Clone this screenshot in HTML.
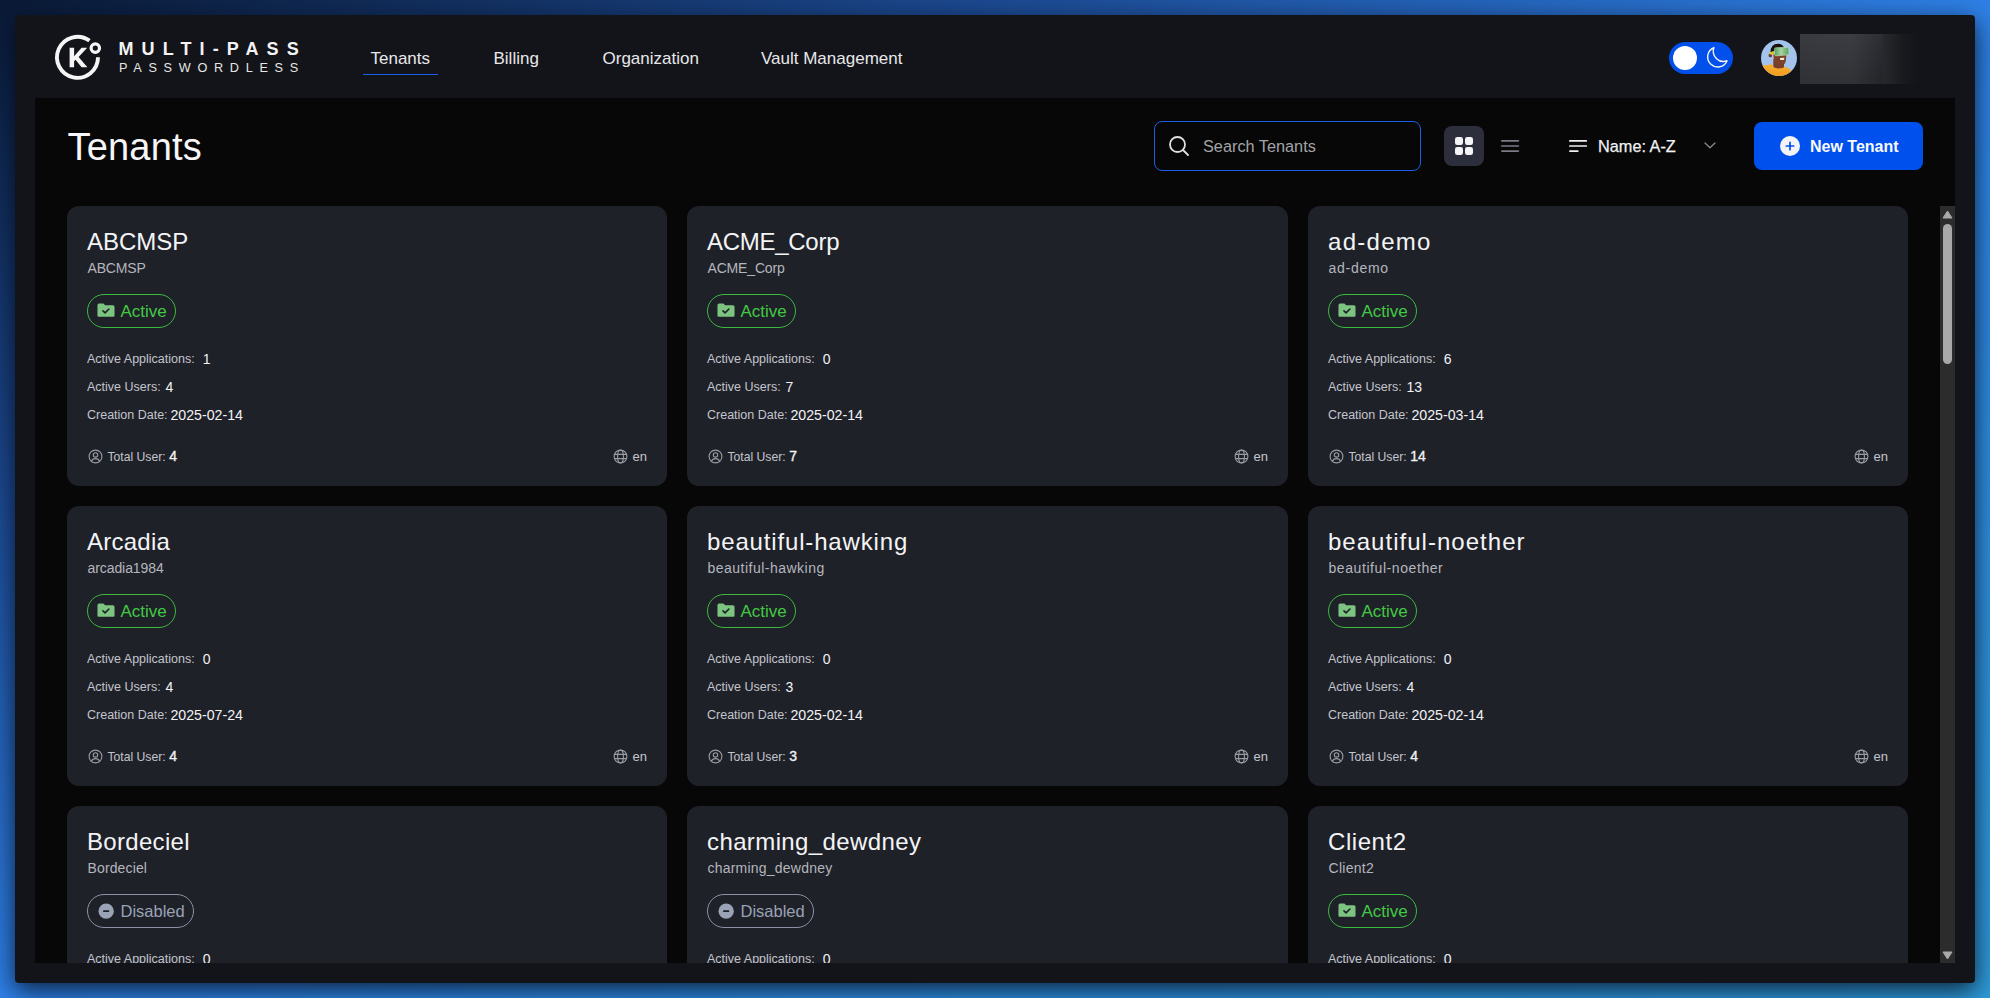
<!DOCTYPE html>
<html><head><meta charset="utf-8">
<style>
*{box-sizing:border-box;margin:0;padding:0}
html,body{width:1990px;height:998px;overflow:hidden}
body{position:relative;font-family:"Liberation Sans",sans-serif;background:linear-gradient(to bottom right,#0a1a36 0%,#1c4a92 25%,#2e80e6 50%,#2e8fe0 75%,#2e9ad8 100%)}
.abs{position:absolute}
.win{position:absolute;left:15px;top:15px;width:1960px;height:968px;background:#131419;border-radius:4px;box-shadow:0 7px 24px rgba(2,6,18,0.8)}
.t{position:absolute;white-space:nowrap;line-height:1}
.content{position:absolute;left:35px;top:98px;width:1920px;height:865px;background:#070707;overflow:hidden}
.nav{color:#e8e8ea;font-size:17px}
.card{position:absolute;width:600.33px;height:280px;background:#1f2129;border-radius:12px}
.card .t,.card div{position:absolute;white-space:nowrap;line-height:1}
.cname{left:20px;top:24px;font-size:24px;color:#f4f4f6}
.csub{left:20.5px;top:55px;font-size:14px;color:#b4b6bd}
.badge{left:20px;top:88px;height:34px;border-radius:17px;border:1.3px solid #3cb93f}
.badge span{position:absolute;top:8px;font-size:17px;line-height:1}
.badge .bi{position:absolute}
.badge.act{width:89px;border-color:#3cb93f}
.badge.act span{left:32.5px;color:#43c844}
.badge.act .bi{left:8.8px;top:8px;width:18px;height:14.3px}
.badge.dis{width:107px;border-color:#8a92a4}
.badge.dis span{left:32.5px;color:#9aa3b5;font-size:16.5px;top:7.5px}
.badge.dis .bi{left:9.7px;top:8px;width:16.3px;height:16.3px}
.row{left:20px;font-size:12.5px;width:300px;height:16px}
.lab{color:#c3c5cc}
.row .lab{position:absolute;left:0;top:0}
.val{position:absolute;top:-1px;color:#f2f2f4;font-size:14px}
.r1 .val{left:114.5px}
.r2 .val{left:78.2px}
.r3 .val{left:83px;font-size:14.2px}
.r1{top:147.3px}
.r2{top:175.3px}
.r3{top:203.3px}
.foot{left:20px;top:243px;font-size:12.5px;width:120px;height:16px}
.foot svg{position:absolute;left:0.7px;top:-0.3px}
.foot .lab{position:absolute;left:20.4px;top:1.5px;font-size:12.2px}
.foot .tv{position:absolute;left:82px;top:0;font-size:14px;color:#f2f2f4;-webkit-text-stroke:0.35px #f2f2f4}
.lang{right:20px;top:243px;width:34px;height:15px;font-size:13px;color:#c3c5cc}
.lang svg{position:absolute;left:0;top:0}
.lang span{position:absolute;left:19.5px;top:0.5px}
</style></head><body>
<div class="win"></div>

<!-- logo -->
<svg class="abs" style="left:52px;top:32px" width="52" height="52" viewBox="0 0 52 52">
  <path d="M37.46 8.65 A20.5 20.5 0 1 0 46 25.3" fill="none" stroke="#f5f5f5" stroke-width="3.9"/>
  <circle cx="43.3" cy="16.1" r="4.2" fill="none" stroke="#f5f5f5" stroke-width="3.2"/>
  <path d="M17.6 15.7 H22.1 V24.2 L29.6 15.7 H35.2 L26.6 25 L35.4 35.3 H29.6 L23.5 27.8 L22.1 29.3 V35.3 H17.6 Z" fill="#f5f5f5"/>
</svg>
<div class="t" style="left:118.5px;top:39.7px;font-size:18px;font-weight:bold;color:#f3f3f3;letter-spacing:8.1px">MULTI-PASS</div>
<div class="t" style="left:119px;top:62px;font-size:12.7px;color:#e6e6e6;letter-spacing:6.7px">PASSWORDLESS</div>

<!-- nav -->
<div class="t nav" style="left:370.5px;top:50px">Tenants</div>
<div class="abs" style="left:363px;top:73.7px;width:75px;height:1.6px;background:#1a5ee8"></div>
<div class="t nav" style="left:493.5px;top:50px">Billing</div>
<div class="t nav" style="left:602.5px;top:50px">Organization</div>
<div class="t nav" style="left:761px;top:50px">Vault Management</div>

<!-- toggle -->
<div class="abs" style="left:1669px;top:42px;width:64px;height:32px;border-radius:16px;background:#0150ec"></div>
<div class="abs" style="left:1673px;top:46px;width:24px;height:24px;border-radius:12px;background:#fff"></div>
<svg class="abs" style="left:1700px;top:40px" width="36" height="36" viewBox="0 0 36 36"><path d="M13.9 7.6 A10.1 10.1 0 1 0 27.1 20.8 A10.3 10.3 0 0 1 13.9 7.6 Z" fill="none" stroke="#f4f4f4" stroke-width="1.45" stroke-linejoin="round"/></svg>

<!-- avatar -->
<svg class="abs" style="left:1761px;top:40px" width="36" height="36" viewBox="0 0 36 36">
 <defs><clipPath id="ac"><circle cx="18" cy="18" r="18"/></clipPath>
 <linearGradient id="gg" x1="0" x2="1"><stop offset="0" stop-color="#4aa056"/><stop offset="0.45" stop-color="#a9d2a6"/><stop offset="1" stop-color="#55a35c"/></linearGradient>
 <linearGradient id="sw" x1="0" y1="0" x2="0" y2="1"><stop offset="0" stop-color="#f7b032"/><stop offset="1" stop-color="#f09a1e"/></linearGradient></defs>
 <g clip-path="url(#ac)">
  <rect width="36" height="36" fill="#a3c3ee"/>
  <path d="M12.3 19 L12.3 29 L23 29 L23 21 Z" fill="#7a3d26"/>
  <path d="M12.5 14 Q12.2 22 16 23.6 Q20 25 24 23.4 Q25.5 20 25.2 14 Z" fill="#7d4028"/>
  <ellipse cx="9.3" cy="15.4" rx="1.7" ry="1.9" fill="#6e3822"/>
  <path d="M9.4 12.5 Q9.6 4 17 3.8 Q22 3.8 23.5 9 L13 11 Z" fill="#17110e"/>
  <rect x="8.6" y="11.8" width="4.6" height="2.8" rx="1.2" fill="#e6c21e"/>
  <path d="M13.4 9.3 Q13.2 8 14.6 7.7 L26.2 7.3 Q27.6 7.3 27.7 8.6 L27.9 13.5 Q27.9 14.8 26.6 14.9 L15 15.9 Q13.8 16 13.6 14.8 Z" fill="url(#gg)" stroke="#d8e8c8" stroke-width="0.5"/>
  <path d="M19 18 L23.3 17.8 L23 20 L19.3 20.1 Z" fill="#f4f0ea"/>
  <path d="M-1 25 Q5 26 10.5 24 Q12 28 17 28.5 Q22 28.6 24.3 26.8 Q28 28 31 31.5 L36 36 L-1 36 Z" fill="url(#sw)"/>
 </g>
</svg>
<!-- blurred name -->
<div class="abs" style="left:1800px;top:34px;width:128px;height:50px;background:linear-gradient(to bottom,rgba(255,255,255,0.02),rgba(0,0,0,0.12)) 0 0/65% 100% no-repeat,linear-gradient(to right,#36373c 0%,#38393e 40%,#2a2b30 62%,#18191d 82%,#131419 92%)"></div>

<!-- content -->
<div class="content"></div>
<div class="t" style="left:67.5px;top:127.5px;font-size:38px;color:#f6f6f8;letter-spacing:0.2px">Tenants</div>

<!-- search -->
<div class="abs" style="left:1154px;top:121px;width:267px;height:50px;border:1.3px solid #1d5ee6;border-radius:8px"></div>
<svg class="abs" style="left:1167px;top:134px" width="24" height="24" viewBox="0 0 24 24" fill="none" stroke="#e0e0e2" stroke-width="1.8" stroke-linecap="round"><circle cx="10.5" cy="10.5" r="7.5"/><path d="M16 16 L21 21"/></svg>
<div class="t" style="left:1203px;top:138px;font-size:16.3px;color:#a3a4a8">Search Tenants</div>

<!-- view toggle -->
<div class="abs" style="left:1444px;top:126px;width:40px;height:40px;border-radius:8px;background:#2c2f3b"></div>
<svg class="abs" style="left:1455px;top:137px" width="18" height="18" viewBox="0 0 18 18" fill="#f4f4f6"><rect x="0" y="0" width="8" height="8" rx="2.3"/><rect x="10" y="0" width="8" height="8" rx="2.3"/><rect x="0" y="10" width="8" height="8" rx="2.3"/><rect x="10" y="10" width="8" height="8" rx="2.3"/></svg>
<svg class="abs" style="left:1500px;top:138px" width="20" height="16" viewBox="0 0 20 16" stroke="#7a7b87" stroke-width="1.6" stroke-linecap="round"><path d="M1.8 2.9 H18.4 M1.8 8 H18.4 M1.8 13.1 H18.4"/></svg>

<!-- sort -->
<svg class="abs" style="left:1568px;top:138px" width="20" height="16" viewBox="0 0 20 16" stroke="#f0f0f2" stroke-width="1.7" stroke-linecap="round"><path d="M1.85 2.9 H18.25 M1.85 8 H18.25 M1.85 13.1 H9.85"/></svg>
<div class="t" style="left:1598px;top:138px;font-size:16.3px;color:#f2f2f4;-webkit-text-stroke:0.25px #f2f2f4">Name: A-Z</div>
<svg class="abs" style="left:1703px;top:141px" width="14" height="9" viewBox="0 0 14 9" fill="none" stroke="#8c8d92" stroke-width="1.2" stroke-linecap="round" stroke-linejoin="round"><path d="M2 2 L7 6.8 L12 2"/></svg>

<!-- new tenant -->
<div class="abs" style="left:1754px;top:122px;width:169px;height:48px;border-radius:8px;background:#0050ee"></div>
<svg class="abs" style="left:1779.5px;top:136px" width="20" height="20" viewBox="0 0 20 20"><circle cx="10" cy="10" r="10" fill="#f4f4f8"/><path d="M10 6.3 V13.7 M6.3 10 H13.7" stroke="#0050ee" stroke-width="1.7" stroke-linecap="round"/></svg>
<div class="t" style="left:1810px;top:138.5px;font-size:16px;font-weight:bold;color:#fafafc">New Tenant</div>

<!-- cards -->
<div class="abs" style="left:0;top:206px;width:1940px;height:757px;overflow:hidden">
<div class="abs" style="left:0;top:-206px;width:1990px;height:998px">
<div class="card" style="left:67px;top:206px;width:600px">
<div class="cname" style="letter-spacing:-0.02px">ABCMSP</div>
<div class="csub" style="letter-spacing:-0.18px">ABCMSP</div>
<div class="badge act"><svg class="bi" width="19" height="15" viewBox="0 0 19 15"><path d="M0.5 2.2 Q0.5 0.5 2.2 0.5 L6.8 0.5 L8.6 2.3 L16.8 2.3 Q18.5 2.3 18.5 4 L18.5 13.3 Q18.5 14.5 17.3 14.5 L1.7 14.5 Q0.5 14.5 0.5 13.3 Z" fill="#7cc47f"/><path d="M6.3 8.3 L8.5 10.4 L12.6 6.3" stroke="#1f2129" stroke-width="1.7" fill="none" stroke-linecap="round" stroke-linejoin="round"/></svg><span>Active</span></div>
<div class="row r1"><span class="lab">Active Applications:</span><span class="val" style="left:115.80px">1</span></div>
<div class="row r2"><span class="lab">Active Users:</span><span class="val" style="left:78.40px">4</span></div>
<div class="row r3"><span class="lab">Creation Date:</span><span class="val v3" style="left:83.40px">2025-02-14</span></div>
<div class="foot"><svg width="15" height="15" viewBox="0 0 15 15" fill="none" stroke="#9a9ca4" stroke-width="1.1"><circle cx="7.5" cy="7.5" r="6.4"/><circle cx="7.5" cy="5.9" r="2.2"/><path d="M3.4 12.4 Q4.4 9.6 7.5 9.6 Q10.6 9.6 11.6 12.4"/></svg><span class="lab">Total User:</span><span class="tv" style="left:82.20px">4</span></div>
<div class="lang"><svg width="15" height="15" viewBox="0 0 15 15" fill="none" stroke="#9a9ca4" stroke-width="1.1"><circle cx="7.5" cy="7.5" r="6.4"/><ellipse cx="7.5" cy="7.5" rx="2.9" ry="6.4"/><path d="M1.4 5.4 H13.6 M1.4 9.6 H13.6"/></svg><span>en</span></div>
</div>
<div class="card" style="left:687px;top:206px;width:601px">
<div class="cname" style="letter-spacing:-0.275px">ACME_Corp</div>
<div class="csub" style="letter-spacing:-0.162px">ACME_Corp</div>
<div class="badge act"><svg class="bi" width="19" height="15" viewBox="0 0 19 15"><path d="M0.5 2.2 Q0.5 0.5 2.2 0.5 L6.8 0.5 L8.6 2.3 L16.8 2.3 Q18.5 2.3 18.5 4 L18.5 13.3 Q18.5 14.5 17.3 14.5 L1.7 14.5 Q0.5 14.5 0.5 13.3 Z" fill="#7cc47f"/><path d="M6.3 8.3 L8.5 10.4 L12.6 6.3" stroke="#1f2129" stroke-width="1.7" fill="none" stroke-linecap="round" stroke-linejoin="round"/></svg><span>Active</span></div>
<div class="row r1"><span class="lab">Active Applications:</span><span class="val" style="left:115.80px">0</span></div>
<div class="row r2"><span class="lab">Active Users:</span><span class="val" style="left:78.40px">7</span></div>
<div class="row r3"><span class="lab">Creation Date:</span><span class="val v3" style="left:83.40px">2025-02-14</span></div>
<div class="foot"><svg width="15" height="15" viewBox="0 0 15 15" fill="none" stroke="#9a9ca4" stroke-width="1.1"><circle cx="7.5" cy="7.5" r="6.4"/><circle cx="7.5" cy="5.9" r="2.2"/><path d="M3.4 12.4 Q4.4 9.6 7.5 9.6 Q10.6 9.6 11.6 12.4"/></svg><span class="lab">Total User:</span><span class="tv" style="left:82.20px">7</span></div>
<div class="lang"><svg width="15" height="15" viewBox="0 0 15 15" fill="none" stroke="#9a9ca4" stroke-width="1.1"><circle cx="7.5" cy="7.5" r="6.4"/><ellipse cx="7.5" cy="7.5" rx="2.9" ry="6.4"/><path d="M1.4 5.4 H13.6 M1.4 9.6 H13.6"/></svg><span>en</span></div>
</div>
<div class="card" style="left:1308px;top:206px;width:600px">
<div class="cname" style="letter-spacing:1.283px">ad-demo</div>
<div class="csub" style="letter-spacing:0.733px">ad-demo</div>
<div class="badge act"><svg class="bi" width="19" height="15" viewBox="0 0 19 15"><path d="M0.5 2.2 Q0.5 0.5 2.2 0.5 L6.8 0.5 L8.6 2.3 L16.8 2.3 Q18.5 2.3 18.5 4 L18.5 13.3 Q18.5 14.5 17.3 14.5 L1.7 14.5 Q0.5 14.5 0.5 13.3 Z" fill="#7cc47f"/><path d="M6.3 8.3 L8.5 10.4 L12.6 6.3" stroke="#1f2129" stroke-width="1.7" fill="none" stroke-linecap="round" stroke-linejoin="round"/></svg><span>Active</span></div>
<div class="row r1"><span class="lab">Active Applications:</span><span class="val" style="left:115.80px">6</span></div>
<div class="row r2"><span class="lab">Active Users:</span><span class="val" style="left:78.40px">13</span></div>
<div class="row r3"><span class="lab">Creation Date:</span><span class="val v3" style="left:83.40px">2025-03-14</span></div>
<div class="foot"><svg width="15" height="15" viewBox="0 0 15 15" fill="none" stroke="#9a9ca4" stroke-width="1.1"><circle cx="7.5" cy="7.5" r="6.4"/><circle cx="7.5" cy="5.9" r="2.2"/><path d="M3.4 12.4 Q4.4 9.6 7.5 9.6 Q10.6 9.6 11.6 12.4"/></svg><span class="lab">Total User:</span><span class="tv" style="left:82.20px">14</span></div>
<div class="lang"><svg width="15" height="15" viewBox="0 0 15 15" fill="none" stroke="#9a9ca4" stroke-width="1.1"><circle cx="7.5" cy="7.5" r="6.4"/><ellipse cx="7.5" cy="7.5" rx="2.9" ry="6.4"/><path d="M1.4 5.4 H13.6 M1.4 9.6 H13.6"/></svg><span>en</span></div>
</div>
<div class="card" style="left:67px;top:506px;width:600px">
<div class="cname" style="letter-spacing:0.25px">Arcadia</div>
<div class="csub" style="letter-spacing:-0.08px">arcadia1984</div>
<div class="badge act"><svg class="bi" width="19" height="15" viewBox="0 0 19 15"><path d="M0.5 2.2 Q0.5 0.5 2.2 0.5 L6.8 0.5 L8.6 2.3 L16.8 2.3 Q18.5 2.3 18.5 4 L18.5 13.3 Q18.5 14.5 17.3 14.5 L1.7 14.5 Q0.5 14.5 0.5 13.3 Z" fill="#7cc47f"/><path d="M6.3 8.3 L8.5 10.4 L12.6 6.3" stroke="#1f2129" stroke-width="1.7" fill="none" stroke-linecap="round" stroke-linejoin="round"/></svg><span>Active</span></div>
<div class="row r1"><span class="lab">Active Applications:</span><span class="val" style="left:115.80px">0</span></div>
<div class="row r2"><span class="lab">Active Users:</span><span class="val" style="left:78.40px">4</span></div>
<div class="row r3"><span class="lab">Creation Date:</span><span class="val v3" style="left:83.40px">2025-07-24</span></div>
<div class="foot"><svg width="15" height="15" viewBox="0 0 15 15" fill="none" stroke="#9a9ca4" stroke-width="1.1"><circle cx="7.5" cy="7.5" r="6.4"/><circle cx="7.5" cy="5.9" r="2.2"/><path d="M3.4 12.4 Q4.4 9.6 7.5 9.6 Q10.6 9.6 11.6 12.4"/></svg><span class="lab">Total User:</span><span class="tv" style="left:82.20px">4</span></div>
<div class="lang"><svg width="15" height="15" viewBox="0 0 15 15" fill="none" stroke="#9a9ca4" stroke-width="1.1"><circle cx="7.5" cy="7.5" r="6.4"/><ellipse cx="7.5" cy="7.5" rx="2.9" ry="6.4"/><path d="M1.4 5.4 H13.6 M1.4 9.6 H13.6"/></svg><span>en</span></div>
</div>
<div class="card" style="left:687px;top:506px;width:601px">
<div class="cname" style="letter-spacing:0.844px">beautiful-hawking</div>
<div class="csub" style="letter-spacing:0.487px">beautiful-hawking</div>
<div class="badge act"><svg class="bi" width="19" height="15" viewBox="0 0 19 15"><path d="M0.5 2.2 Q0.5 0.5 2.2 0.5 L6.8 0.5 L8.6 2.3 L16.8 2.3 Q18.5 2.3 18.5 4 L18.5 13.3 Q18.5 14.5 17.3 14.5 L1.7 14.5 Q0.5 14.5 0.5 13.3 Z" fill="#7cc47f"/><path d="M6.3 8.3 L8.5 10.4 L12.6 6.3" stroke="#1f2129" stroke-width="1.7" fill="none" stroke-linecap="round" stroke-linejoin="round"/></svg><span>Active</span></div>
<div class="row r1"><span class="lab">Active Applications:</span><span class="val" style="left:115.80px">0</span></div>
<div class="row r2"><span class="lab">Active Users:</span><span class="val" style="left:78.40px">3</span></div>
<div class="row r3"><span class="lab">Creation Date:</span><span class="val v3" style="left:83.40px">2025-02-14</span></div>
<div class="foot"><svg width="15" height="15" viewBox="0 0 15 15" fill="none" stroke="#9a9ca4" stroke-width="1.1"><circle cx="7.5" cy="7.5" r="6.4"/><circle cx="7.5" cy="5.9" r="2.2"/><path d="M3.4 12.4 Q4.4 9.6 7.5 9.6 Q10.6 9.6 11.6 12.4"/></svg><span class="lab">Total User:</span><span class="tv" style="left:82.20px">3</span></div>
<div class="lang"><svg width="15" height="15" viewBox="0 0 15 15" fill="none" stroke="#9a9ca4" stroke-width="1.1"><circle cx="7.5" cy="7.5" r="6.4"/><ellipse cx="7.5" cy="7.5" rx="2.9" ry="6.4"/><path d="M1.4 5.4 H13.6 M1.4 9.6 H13.6"/></svg><span>en</span></div>
</div>
<div class="card" style="left:1308px;top:506px;width:600px">
<div class="cname" style="letter-spacing:1.025px">beautiful-noether</div>
<div class="csub" style="letter-spacing:0.575px">beautiful-noether</div>
<div class="badge act"><svg class="bi" width="19" height="15" viewBox="0 0 19 15"><path d="M0.5 2.2 Q0.5 0.5 2.2 0.5 L6.8 0.5 L8.6 2.3 L16.8 2.3 Q18.5 2.3 18.5 4 L18.5 13.3 Q18.5 14.5 17.3 14.5 L1.7 14.5 Q0.5 14.5 0.5 13.3 Z" fill="#7cc47f"/><path d="M6.3 8.3 L8.5 10.4 L12.6 6.3" stroke="#1f2129" stroke-width="1.7" fill="none" stroke-linecap="round" stroke-linejoin="round"/></svg><span>Active</span></div>
<div class="row r1"><span class="lab">Active Applications:</span><span class="val" style="left:115.80px">0</span></div>
<div class="row r2"><span class="lab">Active Users:</span><span class="val" style="left:78.40px">4</span></div>
<div class="row r3"><span class="lab">Creation Date:</span><span class="val v3" style="left:83.40px">2025-02-14</span></div>
<div class="foot"><svg width="15" height="15" viewBox="0 0 15 15" fill="none" stroke="#9a9ca4" stroke-width="1.1"><circle cx="7.5" cy="7.5" r="6.4"/><circle cx="7.5" cy="5.9" r="2.2"/><path d="M3.4 12.4 Q4.4 9.6 7.5 9.6 Q10.6 9.6 11.6 12.4"/></svg><span class="lab">Total User:</span><span class="tv" style="left:82.20px">4</span></div>
<div class="lang"><svg width="15" height="15" viewBox="0 0 15 15" fill="none" stroke="#9a9ca4" stroke-width="1.1"><circle cx="7.5" cy="7.5" r="6.4"/><ellipse cx="7.5" cy="7.5" rx="2.9" ry="6.4"/><path d="M1.4 5.4 H13.6 M1.4 9.6 H13.6"/></svg><span>en</span></div>
</div>
<div class="card" style="left:67px;top:806px;width:600px">
<div class="cname" style="letter-spacing:0.312px">Bordeciel</div>
<div class="csub" style="letter-spacing:0.138px">Bordeciel</div>
<div class="badge dis"><svg class="bi" width="17" height="17" viewBox="0 0 17 17"><circle cx="8.5" cy="8.5" r="8" fill="#9aa3b5"/><rect x="5.3" y="7.6" width="6.4" height="1.8" rx="0.6" fill="#1f2129"/></svg><span>Disabled</span></div>
<div class="row r1"><span class="lab">Active Applications:</span><span class="val" style="left:115.80px">0</span></div>
<div class="row r2"><span class="lab">Active Users:</span><span class="val" style="left:78.40px">4</span></div>
<div class="row r3"><span class="lab">Creation Date:</span><span class="val v3" style="left:83.40px">2025-02-14</span></div>
<div class="foot"><svg width="15" height="15" viewBox="0 0 15 15" fill="none" stroke="#9a9ca4" stroke-width="1.1"><circle cx="7.5" cy="7.5" r="6.4"/><circle cx="7.5" cy="5.9" r="2.2"/><path d="M3.4 12.4 Q4.4 9.6 7.5 9.6 Q10.6 9.6 11.6 12.4"/></svg><span class="lab">Total User:</span><span class="tv" style="left:82.20px">4</span></div>
<div class="lang"><svg width="15" height="15" viewBox="0 0 15 15" fill="none" stroke="#9a9ca4" stroke-width="1.1"><circle cx="7.5" cy="7.5" r="6.4"/><ellipse cx="7.5" cy="7.5" rx="2.9" ry="6.4"/><path d="M1.4 5.4 H13.6 M1.4 9.6 H13.6"/></svg><span>en</span></div>
</div>
<div class="card" style="left:687px;top:806px;width:601px">
<div class="cname" style="letter-spacing:0.393px">charming_dewdney</div>
<div class="csub" style="letter-spacing:0.22px">charming_dewdney</div>
<div class="badge dis"><svg class="bi" width="17" height="17" viewBox="0 0 17 17"><circle cx="8.5" cy="8.5" r="8" fill="#9aa3b5"/><rect x="5.3" y="7.6" width="6.4" height="1.8" rx="0.6" fill="#1f2129"/></svg><span>Disabled</span></div>
<div class="row r1"><span class="lab">Active Applications:</span><span class="val" style="left:115.80px">0</span></div>
<div class="row r2"><span class="lab">Active Users:</span><span class="val" style="left:78.40px">4</span></div>
<div class="row r3"><span class="lab">Creation Date:</span><span class="val v3" style="left:83.40px">2025-02-14</span></div>
<div class="foot"><svg width="15" height="15" viewBox="0 0 15 15" fill="none" stroke="#9a9ca4" stroke-width="1.1"><circle cx="7.5" cy="7.5" r="6.4"/><circle cx="7.5" cy="5.9" r="2.2"/><path d="M3.4 12.4 Q4.4 9.6 7.5 9.6 Q10.6 9.6 11.6 12.4"/></svg><span class="lab">Total User:</span><span class="tv" style="left:82.20px">4</span></div>
<div class="lang"><svg width="15" height="15" viewBox="0 0 15 15" fill="none" stroke="#9a9ca4" stroke-width="1.1"><circle cx="7.5" cy="7.5" r="6.4"/><ellipse cx="7.5" cy="7.5" rx="2.9" ry="6.4"/><path d="M1.4 5.4 H13.6 M1.4 9.6 H13.6"/></svg><span>en</span></div>
</div>
<div class="card" style="left:1308px;top:806px;width:600px">
<div class="cname" style="letter-spacing:0.567px">Client2</div>
<div class="csub" style="letter-spacing:0.267px">Client2</div>
<div class="badge act"><svg class="bi" width="19" height="15" viewBox="0 0 19 15"><path d="M0.5 2.2 Q0.5 0.5 2.2 0.5 L6.8 0.5 L8.6 2.3 L16.8 2.3 Q18.5 2.3 18.5 4 L18.5 13.3 Q18.5 14.5 17.3 14.5 L1.7 14.5 Q0.5 14.5 0.5 13.3 Z" fill="#7cc47f"/><path d="M6.3 8.3 L8.5 10.4 L12.6 6.3" stroke="#1f2129" stroke-width="1.7" fill="none" stroke-linecap="round" stroke-linejoin="round"/></svg><span>Active</span></div>
<div class="row r1"><span class="lab">Active Applications:</span><span class="val" style="left:115.80px">0</span></div>
<div class="row r2"><span class="lab">Active Users:</span><span class="val" style="left:78.40px">4</span></div>
<div class="row r3"><span class="lab">Creation Date:</span><span class="val v3" style="left:83.40px">2025-02-14</span></div>
<div class="foot"><svg width="15" height="15" viewBox="0 0 15 15" fill="none" stroke="#9a9ca4" stroke-width="1.1"><circle cx="7.5" cy="7.5" r="6.4"/><circle cx="7.5" cy="5.9" r="2.2"/><path d="M3.4 12.4 Q4.4 9.6 7.5 9.6 Q10.6 9.6 11.6 12.4"/></svg><span class="lab">Total User:</span><span class="tv" style="left:82.20px">4</span></div>
<div class="lang"><svg width="15" height="15" viewBox="0 0 15 15" fill="none" stroke="#9a9ca4" stroke-width="1.1"><circle cx="7.5" cy="7.5" r="6.4"/><ellipse cx="7.5" cy="7.5" rx="2.9" ry="6.4"/><path d="M1.4 5.4 H13.6 M1.4 9.6 H13.6"/></svg><span>en</span></div>
</div>
</div>
</div>

<!-- scrollbar -->
<div class="abs" style="left:1940px;top:206px;width:15px;height:757px;background:#2c2c2c"></div>
<svg class="abs" style="left:1942px;top:210px" width="11" height="9" viewBox="0 0 11 9"><path d="M5.5 1 L10 8 H1 Z" fill="#a8a8a8" stroke="#a8a8a8" stroke-width="1" stroke-linejoin="round"/></svg>
<div class="abs" style="left:1943px;top:224px;width:9px;height:140px;border-radius:4.5px;background:#a8a8a8"></div>
<svg class="abs" style="left:1942px;top:951px" width="11" height="9" viewBox="0 0 11 9"><path d="M5.5 8 L10 1 H1 Z" fill="#a8a8a8" stroke="#a8a8a8" stroke-width="1" stroke-linejoin="round"/></svg>
</body></html>
